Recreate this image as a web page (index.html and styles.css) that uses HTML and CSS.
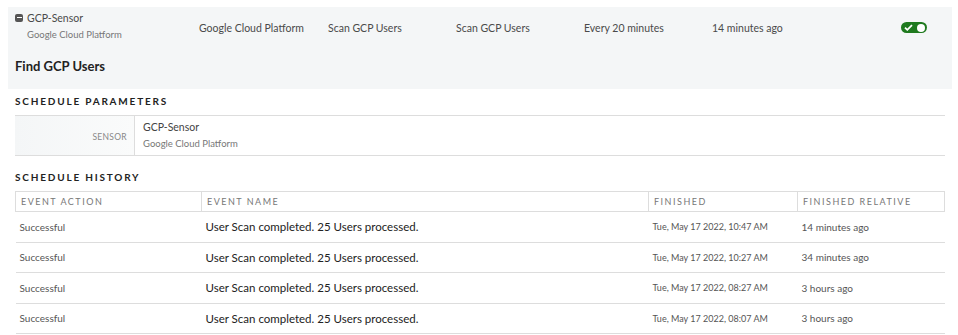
FILE: index.html
```html
<!DOCTYPE html>
<html lang="en">
<head>
    <meta charset="UTF-8">
    <title>Find GCP Users</title>
    <link rel="stylesheet" href="styles.css">
</head>
<body>
    <div class="schedule-panel">
        <div class="schedule-row">
            <div class="sensor-cell">
                <div class="sensor-name">
                    <span class="collapse-icon"></span>
                    GCP-Sensor
                </div>
                <div class="sensor-sub">Google Cloud Platform</div>
            </div>
            <div class="cell">Google Cloud Platform</div>
            <div class="cell">Scan GCP Users</div>
            <div class="cell">Scan GCP Users</div>
            <div class="cell">Every 20 minutes</div>
            <div class="cell">14 minutes ago</div>
            <div class="cell toggle-cell">
                <span class="toggle">
                    <svg width="9" height="7" viewBox="0 0 9 7"><path d="M1 3.6 L3.3 5.8 L8 1.2" fill="none" stroke="#fff" stroke-width="1.8"/></svg>
                    <span class="knob"></span>
                </span>
            </div>
        </div>
        <h2 class="schedule-title">Find GCP Users</h2>
    </div>

    <div class="content">
        <h3 class="section-title">Schedule Parameters</h3>
        <div class="params">
            <div class="param-label">SENSOR</div>
            <div class="param-value">
                <div class="param-main">GCP-Sensor</div>
                <div class="param-sub">Google Cloud Platform</div>
            </div>
        </div>

        <h3 class="section-title">Schedule History</h3>
        <table class="history">
            <thead>
                <tr>
                    <th class="col-action">Event Action</th>
                    <th class="col-name">Event Name</th>
                    <th class="col-finished">Finished</th>
                    <th>Finished Relative</th>
                </tr>
            </thead>
            <tbody>
                <tr>
                    <td class="muted">Successful</td>
                    <td class="event">User Scan completed. 25 Users processed.</td>
                    <td class="date">Tue, May 17 2022, 10:47 AM</td>
                    <td class="muted">14 minutes ago</td>
                </tr>
                <tr>
                    <td class="muted">Successful</td>
                    <td class="event">User Scan completed. 25 Users processed.</td>
                    <td class="date">Tue, May 17 2022, 10:27 AM</td>
                    <td class="muted">34 minutes ago</td>
                </tr>
                <tr>
                    <td class="muted">Successful</td>
                    <td class="event">User Scan completed. 25 Users processed.</td>
                    <td class="date">Tue, May 17 2022, 08:27 AM</td>
                    <td class="muted">3 hours ago</td>
                </tr>
                <tr>
                    <td class="muted">Successful</td>
                    <td class="event">User Scan completed. 25 Users processed.</td>
                    <td class="date">Tue, May 17 2022, 08:07 AM</td>
                    <td class="muted">3 hours ago</td>
                </tr>
            </tbody>
        </table>
    </div>
</body>
</html>
```

FILE: styles.css
```css
body {
    font-family: 'Lato', sans-serif;
    margin: 0;
    padding: 7px 6px 0 8px;
    color: #333;
    background: white;
}

.schedule-panel {
    background-color: #f4f6f7;
    padding: 0 0 1px 0;
}

.schedule-row {
    display: grid;
    grid-template-columns: 184px 129px 128px 128px 128px 1fr auto;
    align-items: center;
    height: 41px;
    padding: 0 25px 0 7px;
    font-size: 10.5px;
    color: #4a4a4a;
}

.sensor-name {
    display: flex;
    align-items: center;
    gap: 4px;
    margin-top: -4px;
}

.collapse-icon {
    width: 8px;
    height: 8px;
    border-radius: 2px;
    background-color: #555;
    position: relative;
}

.collapse-icon::after {
    content: '';
    position: absolute;
    left: 1.5px;
    right: 1.5px;
    top: 3.5px;
    height: 1.2px;
    background: white;
}

.sensor-sub {
    font-size: 9.5px;
    color: #777;
    margin: 5px 0 0 12px;
}

.toggle {
    display: flex;
    align-items: center;
    justify-content: space-between;
    width: 26px;
    height: 11px;
    padding: 0 2px 0 3px;
    box-sizing: border-box;
    border-radius: 6px;
    background-color: #1f7a1f;
}

.knob {
    width: 8px;
    height: 8px;
    border-radius: 50%;
    background: white;
}

.schedule-title {
    font-size: 13px;
    font-weight: bold;
    color: #222;
    margin: 10px 0 14px 7px;
}

.content {
    padding: 0 7px;
}

.section-title {
    font-size: 10px;
    font-weight: bold;
    text-transform: uppercase;
    letter-spacing: 1.8px;
    color: #222;
    margin: 6px 0 8px 0;
}

.params {
    display: flex;
    border-top: 1px solid #ddd;
    border-bottom: 1px solid #ddd;
    height: 39px;
    margin-bottom: 15px;
}

.param-label {
    width: 120px;
    box-sizing: border-box;
    border-right: 1px solid #ddd;
    background: linear-gradient(90deg, #f4f6f7, #fafbfb);
    font-size: 8.5px;
    color: #888;
    letter-spacing: 0.3px;
    text-align: right;
    padding: 16px 7px 0 0;
}

.param-value {
    padding: 5px 8px;
    font-size: 10.5px;
    color: #444;
}

.param-sub {
    font-size: 9.5px;
    color: #777;
    margin-top: 5px;
}

.history {
    width: 930px;
    border-collapse: collapse;
    font-size: 10px;
}

.history th {
    text-align: left;
    font-weight: normal;
    text-transform: uppercase;
    letter-spacing: 1.5px;
    font-size: 9px;
    color: #777;
    border: 1px solid #ddd;
    padding: 0 5px;
    height: 19px;
}

.col-action { width: 175px; }
.col-name { width: 436px; }
.col-finished { width: 138px; }

.history td {
    border-bottom: 1px solid #ddd;
    height: 29.5px;
    padding: 0 4px;
}

.muted {
    color: #555;
}

.event {
    font-size: 11.5px;
    color: #222;
}

.date {
    font-size: 9px;
    color: #555;
}
```
